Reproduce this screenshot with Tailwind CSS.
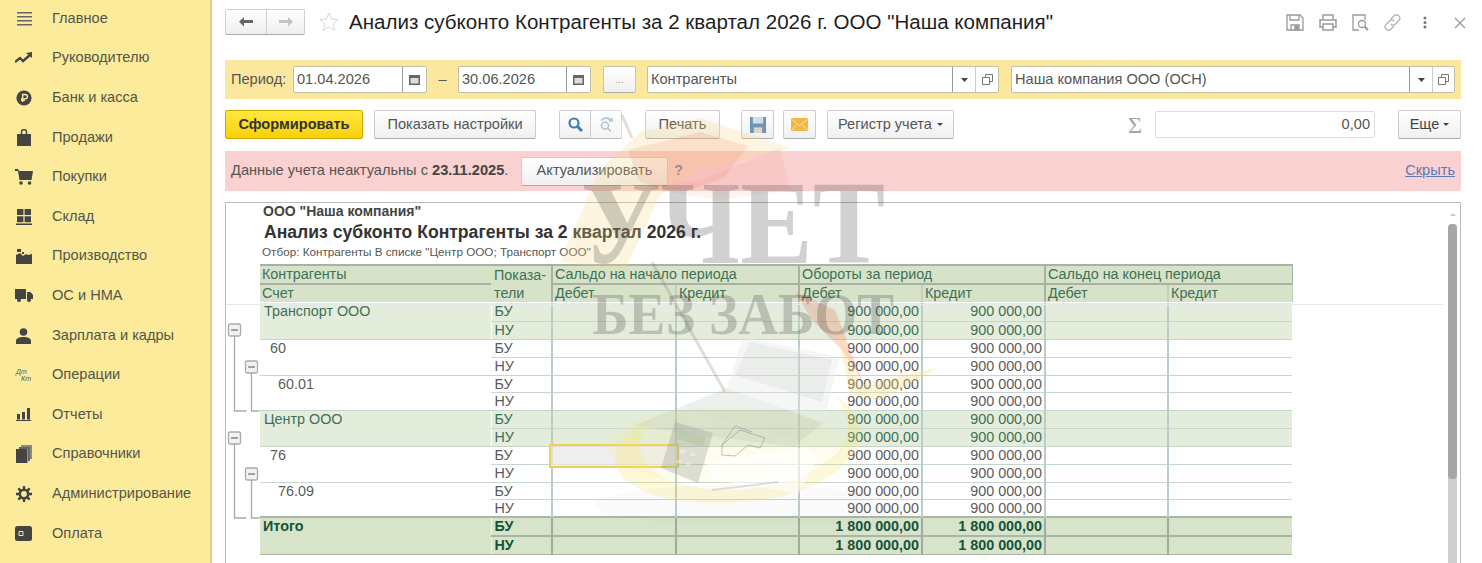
<!DOCTYPE html>
<html lang="ru">
  <head>
    <meta charset="UTF-8" />
    <title>Анализ субконто</title>
    <script src="https://cdn.jsdelivr.net/npm/@tailwindcss/browser@4"></script>
  </head>
  <body class="relative w-[1482px] h-[563px] overflow-hidden bg-white font-['Liberation_Sans',Arial,sans-serif] text-[14.6px] text-[#4a4a4a]">
    <div class="flex h-full">
      <!-- Sidebar -->
      <nav class="w-[212px] shrink-0 h-[565px] -mt-[1px] bg-[#fbeb9b] border-r-2 border-[#d9cf8f] text-[#55554a] flex flex-col">
        <a class="h-[39.6px] flex items-center"><span class="w-[52px] flex justify-center pr-[5px]"><svg width="16" height="16" viewBox="0 0 16 16" fill="#666"><path d="M1 1h15v1.400H1zM1 5h15v1.400H1zM1 9h15v1.400H1zM1 13h15v1.400H1z"/></svg></span>Главное</a>
        <a class="h-[39.6px] flex items-center"><span class="w-[52px] flex justify-center pr-[5px]"><svg width="18" height="12" viewBox="0 0 18 12" fill="none" stroke="#444" stroke-width="2.400"><path d="M0 10l5-4 3 3 7-6"/><path fill="#444" stroke="none" d="M11 1l6-1v6z"/></svg></span>Руководителю</a>
        <a class="h-[39.6px] flex items-center"><span class="w-[52px] flex justify-center pr-[5px]"><svg width="16" height="16" viewBox="0 0 16 16"><circle cx="8" cy="8" r="7.600" fill="#444"/><path d="M6.600 12V4.500h2.600a2 2 0 0 1 0 4.400H5M5 10.400h4" fill="none" stroke="#fbeb9b" stroke-width="1.400"/></svg></span>Банк и касса</a>
        <a class="h-[39.6px] flex items-center"><span class="w-[52px] flex justify-center pr-[5px]"><svg width="14" height="17" viewBox="0 0 14 17"><path d="M4.500 5V3a2.500 2.500 0 0 1 5 0v2" fill="none" stroke="#444" stroke-width="1.400"/><path d="M0 5h14v12H0z" fill="#444"/></svg></span>Продажи</a>
        <a class="h-[39.6px] flex items-center"><span class="w-[52px] flex justify-center pr-[5px]"><svg width="18" height="16" viewBox="0 0 18 16" fill="#444"><path d="M0 0h3l1 2h14l-1.500 9H4.500L3 2H0z"/><circle cx="6" cy="14" r="1.800"/><circle cx="14.500" cy="14" r="1.800"/></svg></span>Покупки</a>
        <a class="h-[39.6px] flex items-center"><span class="w-[52px] flex justify-center pr-[5px]"><svg width="16" height="16" viewBox="0 0 16 16" fill="#444"><path d="M1 0h6.400v6H1zM8.600 0H15v6H8.600zM1 7.200h6.400v6H1zM8.600 7.200H15v6H8.600zM0 14.600h16V16H0z"/></svg></span>Склад</a>
        <a class="h-[39.6px] flex items-center"><span class="w-[52px] flex justify-center pr-[5px]"><svg width="16" height="15" viewBox="0 0 16 15" fill="#444"><path d="M0 15V6l4-2 3 3 3-2 2 1 4-1v10zM1 0h4v3H1zM6 3h2v2H6z"/></svg></span>Производство</a>
        <a class="h-[39.6px] flex items-center"><span class="w-[52px] flex justify-center pr-[5px]"><svg width="18" height="13" viewBox="0 0 18 13" fill="#444"><path d="M0 0h11v10H0zM12 3h3.500L18 6v4h-6z"/><circle cx="4" cy="11" r="2"/><circle cx="14" cy="11" r="2"/></svg></span>ОС и НМА</a>
        <a class="h-[39.6px] flex items-center"><span class="w-[52px] flex justify-center pr-[5px]"><svg width="15" height="16" viewBox="0 0 15 16" fill="#444"><circle cx="7.500" cy="4" r="3.800"/><path d="M0 16v-3c0-2.500 3-4 7.500-4s7.500 1.500 7.500 4v3z"/></svg></span>Зарплата и кадры</a>
        <a class="h-[39.6px] flex items-center"><span class="w-[52px] flex justify-center pr-[5px]"><span class="w-[15px] h-[15px] flex flex-col text-[7px] leading-[7.5px] italic text-[#555]"><span>Дт</span><span class="self-end">Кт</span></span></span>Операции</a>
        <a class="h-[39.6px] flex items-center"><span class="w-[52px] flex justify-center pr-[5px]"><svg width="15" height="13" viewBox="0 0 15 13" fill="#444"><path d="M1 6h3v5.500H1zM6 4h3v7.500H6zM11 0h3v11.500h-3zM0 12h15v1H0z"/></svg></span>Отчеты</a>
        <a class="h-[39.6px] flex items-center"><span class="w-[52px] flex justify-center pr-[5px]"><svg width="16" height="18" viewBox="0 0 16 18"><path d="M5 0h11v14h-2V2H5z" fill="#888"/><path d="M3 2h11v14h-2V4H3z" fill="#666"/><path d="M0 4h11.500v14H0z" fill="#444"/></svg></span>Справочники</a>
        <a class="h-[39.6px] flex items-center"><span class="w-[52px] flex justify-center pr-[5px]"><svg width="16" height="16" viewBox="0 0 16 16"><circle cx="8" cy="8" r="4.200" fill="none" stroke="#444" stroke-width="2.600"/><path d="M8 0v3M8 13v3M0 8h3M13 8h3M2.300 2.300l2.100 2.100M11.600 11.600l2.100 2.100M2.300 13.700l2.100-2.100M11.600 4.400l2.100-2.100" stroke="#444" stroke-width="2.400"/></svg></span>Администрирование</a>
        <a class="h-[39.6px] flex items-center"><span class="w-[52px] flex justify-center pr-[5px]"><svg width="17" height="15" viewBox="0 0 17 15"><rect width="17" height="15" rx="2.500" fill="#444"/><path d="M4 5.500h4v4H4z" fill="none" stroke="#fbeb9b" stroke-width="1"/></svg></span>Оплата</a>
      </nav>

      <main class="flex-1 min-w-0 pl-[13px] pr-[21px]">
        <!-- Title row -->
        <header class="h-[60px] flex items-start relative">
          <div class="flex mt-[9px] h-[26px] w-[80px] border border-[#d0d0d0] border-b-[#aaa] rounded-[2px] bg-gradient-to-b from-white to-[#efefef]">
            <span class="w-[41px] flex items-center justify-center border-r border-[#d0d0d0]"><svg width="14" height="10" viewBox="0 0 14 10" fill="#666"><path d="M5 0v3h9v3H5v3.500L0 4.800z"/></svg></span>
            <span class="flex-1 flex items-center justify-center"><svg width="14" height="10" viewBox="0 0 14 10" fill="#c4c4c4"><path d="M9 0v3H0v3h9v3.500l5-4.700z"/></svg></span>
          </div>
          <svg class="ml-[14px] mt-[12px]" width="20" height="20" viewBox="0 0 20 20" fill="none" stroke="#d9d9d9"><path d="M10 1l2.700 6 6.300.6-4.800 4.200 1.500 6.400-5.700-3.400-5.700 3.400 1.500-6.400L1 7.600 7.300 7z"/></svg>
          <h1 class="ml-[10px] mt-[10px] text-[20.55px] leading-[24px] text-[#1f1f1f] whitespace-nowrap">Анализ субконто Контрагенты за 2 квартал 2026 г. ООО "Наша компания"</h1>
          <div class="absolute left-[1061px] top-[14px] flex items-center gap-[15px]">
            <svg width="18" height="17" viewBox="0 0 18 17" fill="none" stroke="#999" stroke-width="1.300"><path d="M1 1h13l3 3v12H1zM4 1v5h9V1M5 16v-5h8v5"/><path d="M9 12h3v4H9z" fill="#999"/></svg>
            <svg width="18" height="17" viewBox="0 0 18 17" fill="none" stroke="#999" stroke-width="1.500"><path d="M4 5V1h10v4M4 13H1V6h16v7h-3M4 10h10v6H4z"/></svg>
            <svg width="17" height="17" viewBox="0 0 17 17" fill="none" stroke="#999" stroke-width="1.300"><path d="M7 16H1V1h12v5"/><circle cx="10" cy="10" r="3.500"/><path d="M12.500 12.500L16 16" stroke-width="2"/></svg>
            <svg width="17" height="17" viewBox="0 0 17 17" fill="none" stroke="#aaa" stroke-width="1.200"><path d="M7 5l3-3.200a3 3 0 0 1 4.800 4.800L11 10.500a3 3 0 0 1-4-.5M10 12l-3 3.200a3 3 0 0 1-4.800-4.800L6 6.500a3 3 0 0 1 4 .5"/></svg>
            <svg class="ml-[7px]" width="4" height="13" viewBox="0 0 4 13" fill="#777"><circle cx="2" cy="2" r="1.500"/><circle cx="2" cy="6.500" r="1.500"/><circle cx="2" cy="11" r="1.500"/></svg>
            <svg class="ml-[12px]" width="12" height="12" viewBox="0 0 12 12" stroke="#999" stroke-width="1.200"><path d="M1 1l10 10M11 1L1 11"/></svg>
          </div>
        </header>

        <!-- Filter bar -->
        <div class="h-[39px] bg-[#fbe79d] flex items-center pl-[6px] pr-[6px] text-[#555]">
          <span class="w-[62px]">Период:</span>
          <div class="w-[134px] h-[27px] flex bg-white border border-[#c4c0a4] rounded-[2px]"><span class="flex-1 pl-[3px] leading-[25px]">01.04.2026</span><span class="w-[24px] border-l border-[#999] flex items-center justify-center"><svg width="11" height="11" viewBox="0 0 11 11" fill="#666"><path d="M0 1h11v10H0z"/><path d="M1.500 4h8v5.500h-8z" fill="#ddd"/></svg></span></div>
          <span class="w-[31px] text-center">–</span>
          <div class="w-[133px] h-[27px] flex bg-white border border-[#c4c0a4] rounded-[2px]"><span class="flex-1 pl-[3px] leading-[25px]">30.06.2026</span><span class="w-[24px] border-l border-[#999] flex items-center justify-center"><svg width="11" height="11" viewBox="0 0 11 11" fill="#666"><path d="M0 1h11v10H0z"/><path d="M1.500 4h8v5.500h-8z" fill="#ddd"/></svg></span></div>
          <span class="ml-[12px] w-[33px] h-[27px] flex items-center justify-center border border-[#c9c5a9] border-b-[#aaa] rounded-[2px] bg-gradient-to-b from-white to-[#efefef] text-[10px] text-[#999]">...</span>
          <div class="ml-[11px] w-[352px] h-[27px] flex bg-white border border-[#c4c0a4] rounded-[2px]"><span class="flex-1 pl-[3px] leading-[25px]">Контрагенты</span>
            <span class="w-[23px] border-l border-[#999] flex items-center justify-center"><svg width="7" height="4" viewBox="0 0 7 4" fill="#444"><path d="M0 0h7L3.500 4z"/></svg></span>
            <span class="w-[23px] border-l border-[#ccc] flex items-center justify-center"><svg width="11" height="11" viewBox="0 0 11 11" fill="none" stroke="#777"><path d="M3.500 3V.5h7v7H8M.5 3.500h7v7h-7z"/></svg></span></div>
          <div class="ml-[12px] w-[444px] h-[27px] flex bg-white border border-[#c4c0a4] rounded-[2px]"><span class="flex-1 pl-[3px] leading-[25px]">Наша компания ООО (ОСН)</span>
            <span class="w-[23px] border-l border-[#999] flex items-center justify-center"><svg width="7" height="4" viewBox="0 0 7 4" fill="#444"><path d="M0 0h7L3.500 4z"/></svg></span>
            <span class="w-[22px] border-l border-[#ccc] flex items-center justify-center"><svg width="11" height="11" viewBox="0 0 11 11" fill="none" stroke="#777"><path d="M3.500 3V.5h7v7H8M.5 3.500h7v7h-7z"/></svg></span></div>
        </div>

        <!-- Toolbar -->
        <div class="mt-[11px] h-[29px] flex items-center text-[#555]">
          <button class="w-[138px] h-full border border-[#c8a800] rounded-[2px] bg-gradient-to-b from-[#ffe83a] to-[#f7d000] font-bold text-[#333]">Сформировать</button>
          <button class="ml-[11px] w-[162px] h-full border border-[#ccc] border-b-[#aaa] rounded-[2px] bg-gradient-to-b from-white to-[#f0f0f0]">Показать настройки</button>
          <button class="ml-[23px] w-[32px] h-full flex items-center justify-center border border-[#ccc] border-b-[#aaa] rounded-l-[2px] bg-gradient-to-b from-white to-[#f0f0f0]"><svg width="15" height="15" viewBox="0 0 15 15" fill="none" stroke="#3d7fb8" stroke-width="2.200"><circle cx="6" cy="6" r="4.500"/><path d="M9.500 9.500L14 14" stroke-width="3"/></svg></button>
          <button class="w-[31px] h-full flex items-center justify-center border border-l-0 border-[#ddd] border-b-[#bbb] rounded-r-[2px] bg-gradient-to-b from-white to-[#f4f4f4]"><svg width="15" height="15" viewBox="0 0 15 15" fill="none" stroke="#a9c6d4" stroke-width="1.600"><circle cx="6" cy="8.500" r="3.500"/><path d="M8.500 11L12 14.500M2 3.500a7 7 0 0 1 10-.5M13 1v3h-3"/></svg></button>
          <button class="ml-[23px] w-[75px] h-full border border-[#ccc] border-b-[#aaa] rounded-[2px] bg-gradient-to-b from-white to-[#f0f0f0]">Печать</button>
          <button class="ml-[21px] w-[33px] h-full flex items-center justify-center border border-[#ccc] border-b-[#aaa] rounded-[2px] bg-gradient-to-b from-white to-[#f0f0f0]"><svg width="16" height="16" viewBox="0 0 17 17"><path d="M0 0h17v17H0z" fill="#6f93b3"/><path d="M3 0h11v7H3z" fill="#cfdde8"/><path d="M4 11h9v6H4z" fill="#d8d8d0"/></svg></button>
          <button class="ml-[9px] w-[33px] h-full flex items-center justify-center border border-[#ccc] border-b-[#aaa] rounded-[2px] bg-gradient-to-b from-white to-[#f0f0f0]"><svg width="17" height="13" viewBox="0 0 17 13"><rect width="17" height="13" rx="1.500" fill="#f0b648"/><path d="M1 1.500l7.500 6 7.500-6M1 12l5-5.500M16 12l-5-5.500" fill="none" stroke="#fbe6b0"/></svg></button>
          <button class="ml-[11px] w-[127px] h-full border border-[#ccc] border-b-[#aaa] rounded-[2px] bg-gradient-to-b from-white to-[#f0f0f0]">Регистр учета <span class="inline-block ml-[1px] align-middle w-0 h-0 border-x-[3px] border-x-transparent border-t-[3px] border-t-[#444]"></span></button>
          <span class="ml-[173px] w-[28px] font-['Liberation_Serif',serif] text-[24px] leading-none text-[#a5a5a5] pl-[1px]">Σ</span>
          <span class="w-[220px] h-[27px] bg-white border border-[#ddd] rounded-[2px] text-right pr-[4px] leading-[25px]">0,00</span>
          <button class="ml-[23px] w-[63px] h-full border border-[#ccc] border-b-[#aaa] rounded-[2px] bg-gradient-to-b from-white to-[#f0f0f0] text-[#444]">Еще <span class="inline-block align-middle w-0 h-0 border-x-[3px] border-x-transparent border-t-[3px] border-t-[#444]"></span></button>
        </div>

        <!-- Warning bar -->
        <div class="mt-[12px] h-[40px] bg-[#f9d1d1] flex items-center pl-[6px] pr-[6px] text-[#555]">
          <span class="w-[290px] whitespace-nowrap">Данные учета неактуальны с <b class="text-[#444]">23.11.2025</b>.</span>
          <button class="w-[147px] h-[29px] border border-[#ccc] border-b-[#aaa] rounded-[2px] bg-gradient-to-b from-white to-[#f0f0f0]">Актуализировать</button>
          <span class="ml-[6px] font-bold text-[#5f7fc0]">?</span>
          <a class="ml-auto underline text-[#5b7bb5]">Скрыть</a>
        </div>

        <!-- Report -->
        <section class="relative mt-[11px] h-[362px] overflow-hidden border-l border-t border-r border-[#bcbcbc] pl-[34px]">
          <div class="text-[14px] leading-[15px] pt-[1px] font-bold text-[#444] pl-[3px]">ООО "Наша компания"</div>
          <div class="text-[17.6px] leading-[22px] mt-[2px] font-bold text-[#333] pl-[4px] whitespace-nowrap">Анализ субконто Контрагенты за 2 квартал 2026 г.</div>
          <div class="text-[11.7px] leading-[14px] mt-[2px] text-[#555] pl-[2px]">Отбор: Контрагенты В списке "Центр ООО; Транспорт ООО"</div>
          <table class="mt-[5px] w-[1032px] table-fixed border-collapse text-[14.35px] leading-[16px] [&_th]:font-normal [&_th]:align-top [&_th]:text-left [&_td]:align-top">
            <colgroup><col class="w-[231px]" /><col class="w-[61px]" /><col class="w-[124px]" /><col class="w-[123px]" /><col class="w-[123px]" /><col class="w-[123px]" /><col class="w-[123px]" /><col class="w-[124px]" /></colgroup>
            <thead class="text-[#3f7057] bg-[#d6e3c8]">
              <tr class="h-[18px]">
                <th class="border-t-2 border-b-2 border-[#aab0a4] pl-[2px]">Контрагенты</th>
                <th rowspan="2" class="border-t-2 border-[#aab0a4] pl-[3px] leading-[18px]">Показа-<br />тели</th>
                <th colspan="2" class="border-t-2 border-b-2 border-l-2 border-[#aab0a4] pl-[2px]">Сальдо на начало периода</th>
                <th colspan="2" class="border-t-2 border-b-2 border-l-2 border-[#aab0a4] pl-[2px]">Обороты за период</th>
                <th colspan="2" class="border-t-2 border-b-2 border-l-2 border-r border-[#aab0a4] pl-[2px]">Сальдо на конец периода</th>
              </tr>
              <tr class="h-[17px]">
                <th class="pl-[2px]">Счет</th>
                <th class="border-l-2 border-[#aab0a4] pl-[2px]">Дебет</th>
                <th class="border-l-2 border-[#c5cfc0] pl-[2px]">Кредит</th>
                <th class="border-l-2 border-[#aab0a4] pl-[2px]">Дебет</th>
                <th class="border-l-2 border-[#c5cfc0] pl-[2px]">Кредит</th>
                <th class="border-l-2 border-[#aab0a4] pl-[2px]">Дебет</th>
                <th class="border-l-2 border-r border-[#c5cfc0] pl-[2px]">Кредит</th>
              </tr>
              <tr class="h-[1px] bg-white"><td colspan="8"></td></tr>
            </thead>
            <tbody class="[&_tr]:h-[18px] [&_tr:nth-child(5)]:h-[17px] [&_tr:nth-child(11)]:h-[17px] [&_td]:border-b [&_td]:border-[#c6d6cf] [&_td:nth-last-child(-n+6)]:border-l-2 [&_td:nth-last-child(-n+6)]:border-l-[#bccdc8] [&_td:nth-last-child(7)]:border-l [&_td:nth-last-child(7)]:border-l-white">
              <tr class="bg-[#e4eddc] text-[#3f7057]"><td rowspan="2" class="pl-[4px]">Транспорт ООО</td><td class="pl-[3px]">БУ</td><td></td><td></td><td class="text-right pr-[2px]">900 000,00</td><td class="text-right pr-[2px]">900 000,00</td><td></td><td></td></tr>
              <tr class="bg-[#e4eddc] text-[#3f7057]"><td class="pl-[3px]">НУ</td><td></td><td></td><td class="text-right pr-[2px]">900 000,00</td><td class="text-right pr-[2px]">900 000,00</td><td></td><td></td></tr>
              <tr class="text-[#5c5c5c]"><td rowspan="2" class="pl-[10px]">60</td><td class="pl-[3px]">БУ</td><td></td><td></td><td class="text-right pr-[2px]">900 000,00</td><td class="text-right pr-[2px]">900 000,00</td><td></td><td></td></tr>
              <tr class="text-[#5c5c5c]"><td class="pl-[3px]">НУ</td><td></td><td></td><td class="text-right pr-[2px]">900 000,00</td><td class="text-right pr-[2px]">900 000,00</td><td></td><td></td></tr>
              <tr class="text-[#5c5c5c]"><td rowspan="2" class="pl-[18px]">60.01</td><td class="pl-[3px]">БУ</td><td></td><td></td><td class="text-right pr-[2px]">900 000,00</td><td class="text-right pr-[2px]">900 000,00</td><td></td><td></td></tr>
              <tr class="text-[#5c5c5c]"><td class="pl-[3px]">НУ</td><td></td><td></td><td class="text-right pr-[2px]">900 000,00</td><td class="text-right pr-[2px]">900 000,00</td><td></td><td></td></tr>
              <tr class="bg-[#e4eddc] text-[#3f7057]"><td rowspan="2" class="pl-[4px]">Центр ООО</td><td class="pl-[3px]">БУ</td><td></td><td></td><td class="text-right pr-[2px]">900 000,00</td><td class="text-right pr-[2px]">900 000,00</td><td></td><td></td></tr>
              <tr class="bg-[#e4eddc] text-[#3f7057]"><td class="pl-[3px]">НУ</td><td></td><td></td><td class="text-right pr-[2px]">900 000,00</td><td class="text-right pr-[2px]">900 000,00</td><td></td><td></td></tr>
              <tr class="text-[#5c5c5c]"><td rowspan="2" class="pl-[10px]">76</td><td class="pl-[3px]">БУ</td><td class="relative"><div class="absolute -left-[4px] -right-[4px] -top-[3px] -bottom-[4px] border-2 border-[#edd054] bg-[#e8e8e8]/70"></div></td><td></td><td class="text-right pr-[2px]">900 000,00</td><td class="text-right pr-[2px]">900 000,00</td><td></td><td></td></tr>
              <tr class="text-[#5c5c5c]"><td class="pl-[3px]">НУ</td><td></td><td></td><td class="text-right pr-[2px]">900 000,00</td><td class="text-right pr-[2px]">900 000,00</td><td></td><td></td></tr>
              <tr class="text-[#5c5c5c]"><td rowspan="2" class="pl-[18px]">76.09</td><td class="pl-[3px]">БУ</td><td></td><td></td><td class="text-right pr-[2px]">900 000,00</td><td class="text-right pr-[2px]">900 000,00</td><td></td><td></td></tr>
              <tr class="text-[#5c5c5c]"><td class="pl-[3px]">НУ</td><td></td><td></td><td class="text-right pr-[2px]">900 000,00</td><td class="text-right pr-[2px]">900 000,00</td><td></td><td></td></tr>
            </tbody>
            <tbody class="[&_tr]:h-[18.5px] bg-[#d7e4ca] text-[#14523a] font-bold [&_td]:border-t-2 [&_td]:border-b [&_td]:border-[#a9b5a6] [&_td:nth-last-child(-n+6)]:border-l-2 [&_td:nth-last-child(-n+6)]:border-l-[#a3ab9e] [&_td:nth-last-child(7)]:border-l [&_td:nth-last-child(7)]:border-l-[#eef3e8]">
              <tr><td rowspan="2" class="pl-[3px]">Итого</td><td class="pl-[3px]">БУ</td><td></td><td></td><td class="text-right pr-[2px]">1 800 000,00</td><td class="text-right pr-[2px]">1 800 000,00</td><td></td><td></td></tr>
              <tr><td class="pl-[3px]">НУ</td><td></td><td></td><td class="text-right pr-[2px]">1 800 000,00</td><td class="text-right pr-[2px]">1 800 000,00</td><td></td><td></td></tr>
            </tbody>
          </table>

          <!-- line under the fixed header -->
          <div class="absolute left-0 right-[16px] top-[101px] h-px bg-[#e8e8e8]"></div>

          <!-- group tree in the gutter -->
          <svg class="absolute left-0 top-[99px]" width="34" height="230" viewBox="0 0 34 230" fill="none">
            <g stroke="#aaa" stroke-width="1.300">
              <path d="M8.500 33v76h12M25.500 70v39h8M8.500 142v74h12M25.500 178v38h8"/>
              <g fill="#f2f2f2"><rect x="2.500" y="22" width="12" height="12" rx="1.500"/><rect x="19.500" y="59" width="12" height="12" rx="1.500"/><rect x="2.500" y="130" width="12" height="12" rx="1.500"/><rect x="19.500" y="166" width="12" height="12" rx="1.500"/></g>
              <path stroke="#888" d="M5 28h7M22 65h7M5 136h7M22 172h7"/>
            </g>
          </svg>

          <!-- scrollbar -->
          <div class="absolute right-[3px] top-[10px] w-[9px] h-[352px] flex flex-col items-center">
            <span class="w-0 h-0 border-x-[3px] border-x-transparent border-b-[3px] border-b-[#ccc] mb-[8px]"></span>
            <div class="w-[9px] flex-1 bg-[#cfcfcf] rounded-t-[4px]"><div class="h-[255px] bg-[#a6a6a6] rounded-[4px]"></div></div>
          </div>
        </section>
      </main>
    </div>

    <!-- Watermark over the page -->
    <svg class="absolute left-0 top-0 pointer-events-none" width="1482" height="563" viewBox="0 0 1482 563">
      <!-- umbrella -->
      <path d="M560 262L598 172 640 132 700 118 742 132 792 148 778 152 700 170 660 195 625 270z" fill="#f6d880" opacity=".25"/>
      <path d="M628 150L700 132 748 146 724 178 690 190 660 190 638 180z" fill="#ef6a50" opacity=".14"/>
      <path d="M640 188L700 180 780 148 790 190 720 200z" fill="#ef6a50" opacity=".08"/>
      <path d="M795 292L835 310 862 380 842 350 812 320z" fill="#e8553c" opacity=".22"/>
      <path d="M835 320L860 385 940 367 880 400 850 395z" fill="#f8dc70" opacity=".3"/>
      <path d="M622 115L632 138M652 262L725 392" stroke="#8a6a55" stroke-width="3" opacity=".22"/>
      <!-- yellow swoosh and shadow -->
      <ellipse cx="745" cy="505" rx="150" ry="20" fill="#999" opacity=".05"/>
      <path d="M650 420C590 445 600 510 740 502 830 498 900 440 835 395 880 450 800 490 730 490 660 490 620 460 650 420z" fill="#f8e060" opacity=".24"/>
      <ellipse cx="725" cy="445" rx="120" ry="38" fill="#f8ec90" opacity=".14"/>
      <!-- paper -->
      <path d="M705 462L805 447 818 457 798 494 715 480z" fill="#fff" opacity=".55"/>
      <path d="M712 490L778 482" stroke="#999" stroke-width="2" opacity=".3"/>
      <!-- laptop -->
      <path d="M727 388L743 337 840 357 823 423z" fill="#e6e8e6" opacity=".4"/>
      <path d="M735 375L750 342 832 360 822 402z" fill="#8f9a90" opacity=".1"/>
      <path d="M680 407L727 388 823 423 800 441z" fill="#a9b5a5" opacity=".2"/>
      <path d="M635 425L680 407 800 441 795 447 660 430z" fill="#8f9a90" opacity=".12"/>
      <!-- calculator -->
      <path d="M675 422L713 433 698 483 661 468z" fill="#8a8f8a" opacity=".28"/>
      <path d="M679 429L706 437 703 447 676 438z" fill="#b5c5a5" opacity=".6"/>
      <g fill="#fff" opacity=".35"><rect x="680" y="450" width="5" height="3"/><rect x="690" y="453" width="5" height="3"/><rect x="676" y="460" width="5" height="3"/><rect x="686" y="463" width="5" height="3"/></g>
      <!-- glasses -->
      <path d="M722 445L740 430 765 438 760 448 748 445 735 456 722 455zM722 445L735 426 752 432" fill="none" stroke="#8a8f8a" opacity=".55"/>
      <!-- lettering -->
      <text x="581" y="263" font-family="'Liberation Serif',serif" font-weight="700" font-size="118" textLength="304" lengthAdjust="spacingAndGlyphs" fill="#444" opacity=".24">УЧЕТ</text>
      <text x="592" y="334" font-family="'Liberation Serif',serif" font-weight="700" font-size="60" textLength="302" lengthAdjust="spacingAndGlyphs" fill="#444" opacity=".26">БЕЗ ЗАБОТ</text>
    </svg>
  </body>
</html>
